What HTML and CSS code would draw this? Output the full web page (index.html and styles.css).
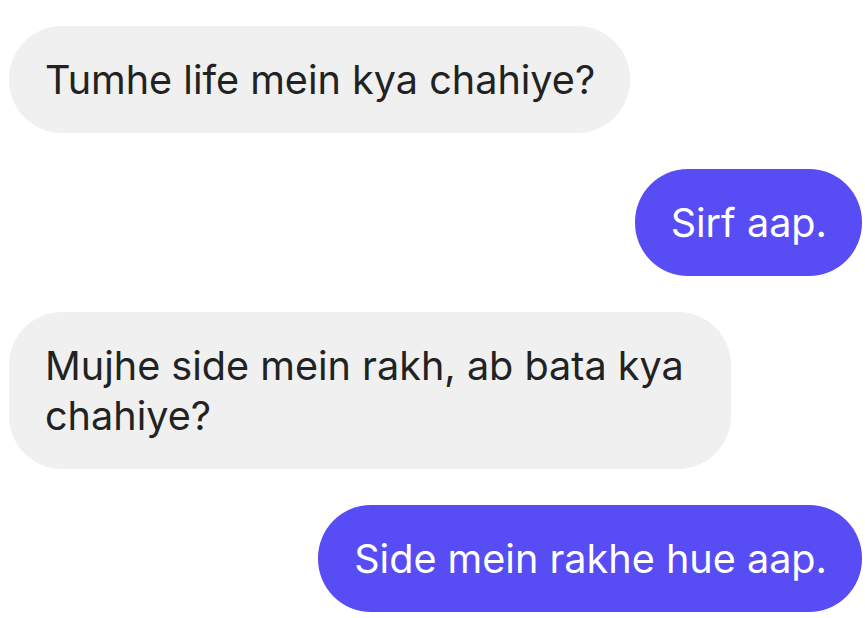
FILE: index.html
```html
<!DOCTYPE html>
<html>
<head>
<meta charset="utf-8">
<link rel="stylesheet" href="styles.css">
</head>
<body>
<div class="chat">
  <div class="bubble in">Tumhe life mein kya chahiye?</div>
  <div class="bubble out">Sirf aap.</div>
  <div class="bubble in">Mujhe side mein rakh, ab bata kya chahiye?</div>
  <div class="bubble out">Side mein rakhe hue aap.</div>
</div>
</body>
</html>
```
FILE: styles.css
```css
html, body {
  margin: 0;
  padding: 0;
  background: #ffffff;
}
.chat {
  display: flex;
  flex-direction: column;
  gap: 36px;
  padding: 26px 3px 0 9px;
  font-family: Inter, "Noto Sans", sans-serif;
  font-size: 39.6px;
  line-height: 50px;
}
.bubble {
  box-sizing: border-box;
  max-width: 722px;
  padding: 29px 35px 28px 36px;
  border-radius: 53px;
}
.in {
  align-self: flex-start;
  background: #f0f0f0;
  color: #222222;
}
.out {
  align-self: flex-end;
  background: #584cf4;
  color: #ffffff;
}
```
